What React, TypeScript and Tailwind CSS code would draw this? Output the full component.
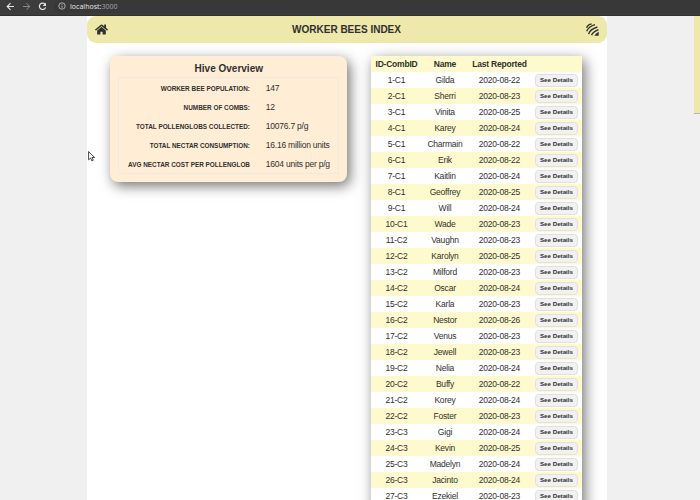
import React from "react";
import { FaHome } from "react-icons/fa";

const bees: [string, string, number][] = [
  ["1-C1", "Gilda", 22],
  ["2-C1", "Sherri", 23],
  ["3-C1", "Vinita", 25],
  ["4-C1", "Karey", 24],
  ["5-C1", "Charmain", 22],
  ["6-C1", "Erik", 22],
  ["7-C1", "Kaitlin", 24],
  ["8-C1", "Geoffrey", 25],
  ["9-C1", "Will", 24],
  ["10-C1", "Wade", 23],
  ["11-C2", "Vaughn", 23],
  ["12-C2", "Karolyn", 25],
  ["13-C2", "Milford", 23],
  ["14-C2", "Oscar", 24],
  ["15-C2", "Karla", 23],
  ["16-C2", "Nestor", 26],
  ["17-C2", "Venus", 23],
  ["18-C2", "Jewell", 23],
  ["19-C2", "Nelia", 24],
  ["20-C2", "Buffy", 22],
  ["21-C2", "Korey", 24],
  ["22-C2", "Foster", 23],
  ["23-C3", "Gigi", 24],
  ["24-C3", "Kevin", 25],
  ["25-C3", "Madelyn", 24],
  ["26-C3", "Jacinto", 24],
  ["27-C3", "Ezekiel", 23],
];

const stats = [
  ["WORKER BEE POPULATION:", "147"],
  ["NUMBER OF COMBS:", "12"],
  ["TOTAL POLLENGLOBS COLLECTED:", "10076.7 p/g"],
  ["TOTAL NECTAR CONSUMPTION:", "16.16 million units"],
  ["AVG NECTAR COST PER POLLENGLOB", "1604 units per p/g"],
];

function BrowserBar() {
  return (
    <div className="flex h-4 shrink-0 items-center border-b border-[#303030] bg-[#3c3c3c] pb-[3px] font-['Noto_Sans',sans-serif]">
      <svg className="ml-[6px] h-[9px] w-[9px]" viewBox="0 0 9 9" fill="none" stroke="#e4e4e4" strokeWidth="1.1">
        <path d="M8 4.5H1.4M4.5 1.2L1.2 4.5l3.3 3.3" />
      </svg>
      <svg className="ml-[7px] h-[9px] w-[9px]" viewBox="0 0 9 9" fill="none" stroke="#8a8a8a" strokeWidth="1">
        <path d="M1 4.5h6.6M4.5 1.2l3.3 3.3-3.3 3.3" />
      </svg>
      <svg className="ml-[7px] h-[9px] w-[9px]" viewBox="0 0 9 9" fill="none" stroke="#e4e4e4" strokeWidth="1.2">
        <path d="M7.3 2.6A3.2 3.2 0 1 0 7.6 5.4" />
        <path d="M8 .7v3.4H4.6z" fill="#e4e4e4" stroke="none" />
      </svg>
      <div className="ml-[7px] flex h-[13px] flex-1 items-center rounded-l-full bg-[#383838] pl-[4px]">
        <svg className="h-[8px] w-[8px]" viewBox="0 0 8 8" fill="none" stroke="#c8c8c8" strokeWidth=".8">
          <circle cx="4" cy="4" r="3.2" />
          <path d="M4 3.5v2.3M4 2v.8" />
        </svg>
        <span className="ml-[4px] text-[7px] leading-none text-[#e0e0e0]">
          localhost:<span className="text-[#a0a0a0]">3000</span>
        </span>
      </div>
    </div>
  );
}

function StripesIcon() {
  return (
    <svg className="h-[13px] w-[13px]" viewBox="0 0 13 13" fill="none" stroke="#303030" strokeWidth="1.4">
      <path d="M.5 4.8Q2 1.4 5.6.9" />
      <path d="M.7 8.2Q2.6 3.6 9 1.7" />
      <path d="M2.6 11Q4 6.4 11.4 4" />
      <path d="M5.6 12.2Q6.6 9 12.5 6.6" />
      <path d="M8.3 12.7Q9.8 10.3 12.7 8.8V12.7z" fill="#303030" stroke="none" />
    </svg>
  );
}

function HiveOverview() {
  return (
    <section className="mt-[12.5px] ml-[23.8px] h-[126.5px] w-[237px] rounded-[8px] bg-[#ffeed5] px-[8px] pt-[6.5px] shadow-[3px_4px_13px_rgba(0,0,0,0.55)]">
      <h2 className="text-center text-[10px] leading-[13px] font-bold">Hive Overview</h2>
      <div className="mt-[2px] h-[97px] border border-[#ebeae4] pt-px">
        {stats.map(([label, value]) => (
          <div key={label} className="flex h-[19px] items-center">
            <span className="w-[130.7px] shrink-0 text-right text-[6.4px] font-bold whitespace-nowrap">{label}</span>
            <span className="ml-[15.8px] text-[8.5px] tracking-[-0.22px] whitespace-nowrap">{value}</span>
          </div>
        ))}
      </div>
    </section>
  );
}

function BeeTable() {
  return (
    <section className="mt-[13px] ml-[23.7px] h-[500px] w-[211px] bg-white text-[8.5px] tracking-[-0.22px] shadow-[3px_4px_13px_rgba(0,0,0,0.55)]">
      <div className="grid h-4 grid-cols-[51px_46px_63px_51px] items-center bg-[#fffacd] text-center font-bold whitespace-nowrap">
        <span>ID-CombID</span>
        <span>Name</span>
        <span>Last Reported</span>
      </div>
      {bees.map(([id, name, day]) => (
        <div key={id} className="grid h-4 grid-cols-[51px_46px_63px_51px] items-center text-center even:bg-white odd:bg-[#fffacd]">
          <span>{id}</span>
          <span>{name}</span>
          <span>2020-08-{day}</span>
          <button className="mt-px ml-[4px] h-[13px] w-[43px] rounded-[4px] border border-[#e0e0e0] bg-[#f1f1f1] text-[6.2px] leading-none font-bold tracking-normal">
            See Details
          </button>
        </div>
      ))}
    </section>
  );
}

export default function App() {
  return (
    <div className="relative flex h-[500px] w-[700px] flex-col overflow-hidden bg-[#f0f0f0] font-['Liberation_Sans',Arial,sans-serif] text-[#303030]">
      <BrowserBar />
      <div className="flex min-h-0 flex-1">
        <main className="ml-[86.5px] w-[520px] overflow-hidden bg-white">
          <header className="flex h-[27px] items-center justify-between rounded-[9px] bg-[#eee8aa] px-[8px]">
            <FaHome className="h-[13px] w-[13px]" />
            <h1 className="text-[10px] leading-none font-bold">WORKER BEES INDEX</h1>
            <StripesIcon />
          </header>
          <div className="flex items-start">
            <HiveOverview />
            <BeeTable />
          </div>
        </main>
        <div className="ml-auto h-full w-[6px] bg-[#f0f0f0]">
          <div className="h-[98px] border-b border-[#b8b8a8] bg-[#eee8aa]" />
        </div>
      </div>
      <svg className="absolute top-[151px] left-[88px] h-[11px] w-[8px]" viewBox="0 0 8 11">
        <path d="M.6.6v8.2l2-1.7 1.3 2.8 1.4-.7L4 6.5h2.6z" fill="#fff" stroke="#303030" strokeWidth=".9" />
      </svg>
    </div>
  );
}
